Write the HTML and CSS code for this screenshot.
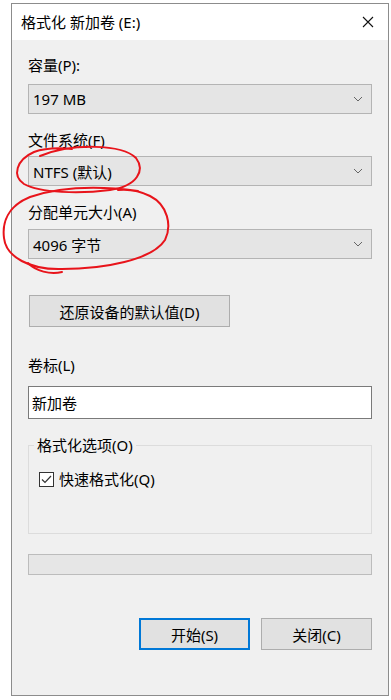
FILE: index.html
```html
<!DOCTYPE html>
<html lang="zh-CN">
<head>
    <meta charset="UTF-8">
    <meta name="viewport" content="width=device-width, initial-scale=1.0">
    <title>格式化 新加卷 (E:)</title>
    <link rel="stylesheet" href="styles.css">
</head>
<body>
    <div class="window">
        <div class="titlebar">
            <span class="title">格式化 新加卷 (E:)</span>
            <svg class="close" width="12" height="12" viewBox="0 0 12 12">
                <path d="M1 1 L11 11 M11 1 L1 11" stroke="#111" stroke-width="1.1" fill="none"/>
            </svg>
        </div>
        <div class="content">
            <div class="label first">容量(P):</div>
            <div class="combo gap-9">
                <span>197 MB</span>
                <svg width="10" height="6" viewBox="0 0 10 6"><path d="M1 1 L5 5 L9 1" stroke="#666" stroke-width="1" fill="none"/></svg>
            </div>

            <div class="label gap-16">文件系统(F)</div>
            <div class="combo gap-6">
                <span>NTFS (默认)</span>
                <svg width="10" height="6" viewBox="0 0 10 6"><path d="M1 1 L5 5 L9 1" stroke="#666" stroke-width="1" fill="none"/></svg>
            </div>

            <div class="label gap-16">分配单元大小(A)</div>
            <div class="combo gap-7">
                <span>4096 字节</span>
                <svg width="10" height="6" viewBox="0 0 10 6"><path d="M1 1 L5 5 L9 1" stroke="#666" stroke-width="1" fill="none"/></svg>
            </div>

            <button class="btn restore">还原设备的默认值(D)</button>

            <div class="label gap-28">卷标(L)</div>
            <div class="textbox">新加卷</div>

            <fieldset class="group">
                <legend>格式化选项(O)</legend>
                <label class="check">
                    <span class="box">
                        <svg width="13" height="13" viewBox="0 0 13 13"><path d="M2 6.5 L5 9.5 L11 3" stroke="#333" stroke-width="1.2" fill="none"/></svg>
                    </span>
                    快速格式化(Q)
                </label>
            </fieldset>

            <div class="progress"></div>

            <div class="actions">
                <button class="btn default">开始(S)</button>
                <button class="btn">关闭(C)</button>
            </div>
        </div>
    </div>

    <!-- red pen marks drawn over the dialog -->
    <svg class="marks" width="391" height="700" viewBox="0 0 391 700">
        <path d="M40 156 C72 143 122 144 136 158 C145 170 138 186 110 190 C80 194 40 193 24 184 C12 176 16 160 34 152 C48 147 62 148 72 149"
              stroke="#e8141b" stroke-width="2" fill="none" stroke-linecap="round"/>
        <path d="M138 191 C100 186 60 187 30 197 C8 206 2 222 4 238 C6 257 30 270 62 269 C104 269 152 260 165 240 C172 226 168 205 150 196 C140 191 128 189 118 190"
              stroke="#e8141b" stroke-width="2" fill="none" stroke-linecap="round"/>
        <path d="M28 263 C36 271 50 275 62 272"
              stroke="#e8141b" stroke-width="2" fill="none" stroke-linecap="round"/>
    </svg>
</body>
</html>
```

FILE: styles.css
```css
body {
    margin: 0;
    background: #ffffff;
    font-family: "Noto Sans", "Noto Sans CJK SC", sans-serif;
    font-size: 15px;
    color: #000;
    position: relative;
    width: 391px;
    height: 700px;
    overflow: hidden;
}

.window {
    margin: 3px 0 0 11px;
    width: 378px;
    height: 693px;
    border: 1px solid #8c8c8c;
    box-sizing: border-box;
    background: #f0f0f0;
    display: flex;
    flex-direction: column;
}

.titlebar {
    height: 36px;
    background: #fff;
    display: flex;
    align-items: center;
    justify-content: space-between;
    padding: 0 14px 0 9px;
    flex-shrink: 0;
}

.title {
    font-size: 15px;
    line-height: 20px;
}

.content {
    padding: 15px 16px 0 16px;
    display: flex;
    flex-direction: column;
}

.label {
    line-height: 20px;
    height: 20px;
}

.gap-6 { margin-top: 6px; }
.gap-7 { margin-top: 7px; }
.gap-9 { margin-top: 9px; }
.gap-16 { margin-top: 16px; }
.gap-28 { margin-top: 28px; }

.combo {
    height: 30px;
    box-sizing: border-box;
    border: 1px solid #b4b4b4;
    background: #e5e5e5;
    display: flex;
    align-items: center;
    justify-content: space-between;
    padding: 0 8px 0 4px;
}

.btn {
    font-family: inherit;
    font-size: 15px;
    color: #000;
    background: #e1e1e1;
    border: 1px solid #adadad;
    height: 32px;
    padding: 0;
    box-sizing: border-box;
    cursor: pointer;
}

.restore {
    margin-top: 36px;
    margin-left: 1px;
    width: 201px;
}

.textbox {
    margin-top: 11px;
    height: 33px;
    box-sizing: border-box;
    border: 1px solid #7a7a7a;
    background: #fff;
    display: flex;
    align-items: center;
    padding-left: 3px;
}

.group {
    margin: 17px 0 0 0;
    padding: 10px 0 0 10px;
    height: 98px;
    box-sizing: border-box;
    border: 1px solid #dcdcdc;
    border-radius: 0;
    min-width: 0;
}

.group legend {
    padding: 0 3px 0 3px;
    margin-left: -5px;
    line-height: 18px;
}

.check {
    display: flex;
    align-items: center;
    gap: 5px;
    line-height: 20px;
    margin-top: 5px;
}

.box {
    width: 15px;
    height: 15px;
    box-sizing: border-box;
    border: 1px solid #333;
    background: #fff;
    display: flex;
    align-items: center;
    justify-content: center;
}

.progress {
    margin-top: 20px;
    height: 21px;
    box-sizing: border-box;
    border: 1px solid #bcbcbc;
    background: #e6e6e6;
}

.actions {
    margin-top: 43px;
    display: flex;
    justify-content: flex-end;
    gap: 11px;
}

.actions .btn {
    width: 111px;
}

.actions .default {
    border: 2px solid #0078d7;
}

.marks {
    position: absolute;
    top: 0;
    left: 0;
    pointer-events: none;
}
```
